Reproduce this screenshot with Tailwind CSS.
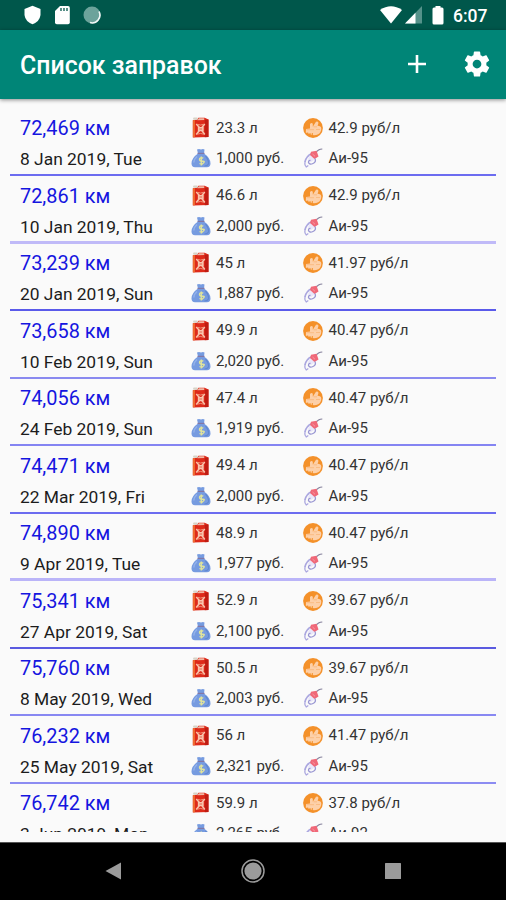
<!DOCTYPE html>
<html lang="ru">
<head>
<meta charset="utf-8">
<title>Список заправок</title>
<script src="https://cdn.jsdelivr.net/npm/@tailwindcss/browser@4"></script>
</head>
<body class="w-[506px] h-[900px] overflow-hidden bg-[#fafafa] font-['Roboto','Noto_Sans',sans-serif] flex flex-col">
<svg class="hidden">
  <symbol id="can" viewBox="0 0 16 21" preserveAspectRatio="none">
    <path d="M.8 3.200 5 2.600 6 .8h6L15.500 2.500V20L.8 20.500Z" fill="#de2a1a"/>
    <path d="M12 3 15.500 2.500V20l-3.500.3Z" fill="#c01c12"/>
    <path d="M.8 3.200v17l2 .1V3Z" fill="#ee6a30"/>
    <path d="M5 3.300 6.500 1.300h5V3Z" fill="#f0b8a5"/>
    <rect x="1" y=".5" width="4.500" height="2.200" rx="1" fill="#d8d4c8"/>
    <path d="M4 7 7 10.500M12 7 9.300 10.500M4 17.500 7 13.500M12 17.500 9.300 13.500" stroke="#f9c5ae" stroke-width="1.400" fill="none"/>
    <path d="M5 7.300q3 1.500 6 0M5 17.200q3-1.500 6 0" stroke="#f29a80" stroke-width=".9" fill="none"/>
    <rect x="5.500" y="10" width="5.500" height="4.200" fill="#f9c5ae"/>
    <path d="M7 12h2.500" stroke="#e0604a" stroke-width=".9"/>
  </symbol>
  <symbol id="bag" viewBox="0 0 20 20">
    <path d="M6 1.500q2-1 4 0 2-1 3.500 0L13 5.500q6.500 4.500 6.500 10 0 3.700-3.500 3.700H4Q.5 19.200.5 15.500.5 10 7 5.500Z" fill="#769be0"/>
    <path d="M6 8.500Q3 11 2.800 14.500" stroke="#93b2ea" stroke-width="1.500" fill="none"/>
    <path d="M6.500 5.400h7" stroke="#8277a5" stroke-width="1.200"/>
    <path d="M14.500 8q3.500 4 3 8-1 2-4 2" stroke="#6188d0" stroke-width="1.200" fill="none"/>
    <path d="M12.300 10q-3.800-1-3.800 1.200t3.300 2-.8 3q-1.500 0-2.500-.7M10.300 8.500v9" stroke="#dfe39c" stroke-width="1.400" fill="none"/>
  </symbol>
  <symbol id="coin" viewBox="0 0 20 20">
    <circle cx="10" cy="10" r="9.900" fill="#f4912a"/>
    <path d="M7 10.500V6q1.500-2 2.800-.3v3l3.200-5q2.700-.7 2.400 1.600l-.8 2.400q3.500 0 3.700 2.500 0 4-3 6-4 1.800-7.500.3L2.800 14.500l.2-3.500Z" fill="#fdd0a8"/>
    <path d="M3.500 11.700h7.500M10.500 8.800h3.500M13 11.500h4" stroke="#f8b67a" stroke-width=".8"/>
    <path d="M4.700 14.500v2M7 15v2M9.300 15v2" stroke="#f4912a" stroke-width="1"/>
  </symbol>
  <symbol id="nozzle" viewBox="0 0 20 20">
    <path d="M13 4.500Q15 1.200 19.300 1" stroke="#85819c" stroke-width="1.200" fill="none"/>
    <path d="M9 5.500Q3 8 1.800 14.500" stroke="#aaa6df" stroke-width="1.700" fill="none"/>
    <path d="M6.500 7.500 5 11.500l3 2.500 5-3.500Z" fill="#e9e6f9"/>
    <path d="M8 3.800 13.500 2.800 15.500 8.500 11.500 11 7 7Z" fill="#f06878"/>
    <path d="M9.500 6 12 8.300" stroke="#f79aa2" stroke-width="1"/>
    <path d="M12 10.500q1.500 3.500-2 5t-4.500-1q0-2.500 2-2" stroke="#9996d2" stroke-width="1.300" fill="none"/>
    <path d="M1.800 14.500q-.3 3 1.500 4.500l2-1.500" stroke="#aaa6df" stroke-width="1.300" fill="none"/>
  </symbol>
</svg>

<header class="shrink-0">
  <div class="h-[30px] bg-[#00574b] flex items-center justify-between pl-[24px] pr-[18px]">
    <div class="flex items-center gap-[13px]">
      <svg class="w-[17px] h-[20px]" viewBox="0 0 17 20"><path d="M8.500.8 16.500 4v6q-.8 6.500-8 9.200Q1.300 16.500.5 10V4Z" fill="#fff"/></svg>
      <svg class="w-[16px] h-[20px]" viewBox="0 0 16 20"><path d="M6 1h8q1.800 0 1.800 1.800v14.700q0 1.800-1.800 1.800H2.800Q1 19.300 1 17.500V6Z" fill="#fff"/><path d="M7 3v3M10 3v3M13 3v3" stroke="#00574b" stroke-width="1.300"/></svg>
      <svg class="w-[18px] h-[18px]" viewBox="0 0 18 18"><circle cx="9" cy="9" r="8.500" fill="#6ca39b"/><path d="M16 5.500A7.800 7.800 0 0 1 7 16.600" stroke="#f3f8f7" stroke-width="1.600" fill="none"/></svg>
    </div>
    <div class="flex items-center">
      <svg class="w-[22px] h-[18px]" viewBox="0 0 22 18"><path d="M0 4Q11-3.500 22 4L11 17.500Z" fill="#fff"/></svg>
      <svg class="ml-[3px] w-[17px] h-[18px]" viewBox="0 0 17 18"><path d="M17 0v17.500H0Z" fill="#55928a"/><path d="M10.500 6.700v10.800H0Z" fill="#fff"/></svg>
      <svg class="ml-[10px] w-[12px] h-[20px]" viewBox="0 0 12 20"><path d="M3.500 1h5v1.500H10q1.500 0 1.500 1.500v14q0 1.500-1.500 1.500H2Q.5 19.500.5 18V4Q.5 2.500 2 2.500h1.500Z" fill="#fff"/></svg>
      <span class="ml-[9px] mt-[2px] w-[35px] text-[17.5px] leading-[20px] font-medium text-white">6:07</span>
    </div>
  </div>
  <div class="relative h-[69px] bg-[#008577] shadow-[0_1px_4px_rgba(0,0,0,0.45)] flex items-center pl-[20px] pr-[14px]">
    <h1 class="text-[24.9px] font-medium text-white leading-[30px] pt-[3px] whitespace-nowrap">Список заправок</h1>
    <svg class="ml-auto -mt-[2px] w-[18px] h-[18px]" viewBox="0 0 18 18"><path d="M9 0v18M0 9h18" stroke="#fff" stroke-width="2.600"/></svg>
    <svg class="ml-[36px] -mt-px w-[30px] h-[30px]" viewBox="0 0 24 24"><path fill="#fff" d="M19.430 12.980c.04-.32.07-.64.07-.98s-.03-.66-.07-.98l2.110-1.650c.19-.15.24-.42.12-.64l-2-3.460c-.12-.22-.39-.3-.61-.22l-2.490 1c-.52-.4-1.080-.73-1.690-.98l-.38-2.650C14.460 2.180 14.250 2 14 2h-4c-.25 0-.46.18-.49.42l-.38 2.650c-.61.25-1.170.59-1.690.98l-2.490-1c-.23-.09-.49 0-.61.22l-2 3.460c-.13.22-.07.49.12.64l2.110 1.650c-.04.32-.07.65-.07.98s.03.66.07.98l-2.110 1.650c-.19.15-.24.42-.12.64l2 3.460c.12.22.39.3.61.22l2.490-1c.52.4 1.080.73 1.690.98l.38 2.650c.03.24.24.42.49.42h4c.25 0 .46-.18.49-.42l.38-2.650c.61-.25 1.170-.59 1.690-.98l2.490 1c.23.09.49 0 .61-.22l2-3.460c.12-.22.07-.49-.12-.64l-2.110-1.650zM12 15.500c-1.930 0-3.500-1.570-3.500-3.500s1.570-3.500 3.500-3.500 3.500 1.570 3.500 3.500-1.570 3.500-3.500 3.500z"/></svg>
  </div>
</header>

<main id="list" class="mt-[9.5px] mx-[10px] h-[723px] shrink-0 overflow-hidden"></main>

<nav class="mt-auto h-[58px] shrink-0 bg-black border-t border-[#555] pb-[2px] flex items-center justify-between pl-[105px] pr-[105px]">
  <svg class="w-[16px] h-[18px]" viewBox="0 0 16 18"><path d="M16 .5v17L.5 9Z" fill="#9b9b9b"/></svg>
  <svg class="w-[24px] h-[24px]" viewBox="0 0 24 24"><circle cx="12" cy="12" r="11" fill="none" stroke="#9b9b9b" stroke-width="1.500"/><circle cx="12" cy="12" r="8.600" fill="#9b9b9b"/></svg>
  <svg class="w-[16px] h-[16px]" viewBox="0 0 16 16"><rect width="16" height="16" rx=".5" fill="#9b9b9b"/></svg>
</nav>

<script>
const rows = [
  ["72,469", "8 Jan 2019, Tue", "23.3", "1,000", "42.9", "Аи-95", "border-b-2 border-[#6c6cf0]"],
  ["72,861", "10 Jan 2019, Thu", "46.6", "2,000", "42.9", "Аи-95", "border-b-3 border-[#c0baf8]"],
  ["73,239", "20 Jan 2019, Sun", "45", "1,887", "41.97", "Аи-95", "border-b-2 border-[#5a5aea]"],
  ["73,658", "10 Feb 2019, Sun", "49.9", "2,020", "40.47", "Аи-95", "border-b-2 border-[#8a8af0]"],
  ["74,056", "24 Feb 2019, Sun", "47.4", "1,919", "40.47", "Аи-95", "border-b-2 border-[#8484f2]"],
  ["74,471", "22 Mar 2019, Fri", "49.4", "2,000", "40.47", "Аи-95", "border-b-2 border-[#6c6cf0]"],
  ["74,890", "9 Apr 2019, Tue", "48.9", "1,977", "40.47", "Аи-95", "border-b-3 border-[#bab4f8]"],
  ["75,341", "27 Apr 2019, Sat", "52.9", "2,100", "39.67", "Аи-95", "border-b-2 border-[#5a5ae0]"],
  ["75,760", "8 May 2019, Wed", "50.5", "2,003", "39.67", "Аи-95", "border-b-2 border-[#8888f2]"],
  ["76,232", "25 May 2019, Sat", "56", "2,321", "41.47", "Аи-95", "border-b-2 border-[#8c8cf2]"],
  ["76,742", "3 Jun 2019, Mon", "59.9", "2,265", "37.8", "Аи-92", "border-b-2 border-[#8080f0]"]
];
document.getElementById("list").innerHTML = rows.map(([km, date, litres, sum, price, fuel, line]) => `
  <section class="h-[67.5px] ${line} pl-[10px] pt-[4.5px] grid grid-cols-[171px_112px_1fr] grid-rows-[30px_31px] items-center whitespace-nowrap text-[15px] text-[#333]">
    <div class="text-[19.9px] pt-[2px] text-[#1515e0]">${km} км</div>
    <div class="flex items-center gap-[7px]"><svg class="ml-[1px] mb-px w-[17px] h-[21px]"><use href="#can"/></svg><span>${litres} л</span></div>
    <div class="flex items-center gap-[5.5px]"><svg class="w-[20px] h-[20px]"><use href="#coin"/></svg><span>${price} руб/л</span></div>
    <div class="text-[17.4px] pt-[1.5px] text-[#1c1c1c]">${date}</div>
    <div class="flex items-center gap-[5px]"><svg class="mb-px w-[20px] h-[20px]"><use href="#bag"/></svg><span>${sum} руб.</span></div>
    <div class="flex items-center gap-[5.5px]"><svg class="mb-px w-[20px] h-[20px]"><use href="#nozzle"/></svg><span>${fuel}</span></div>
  </section>`).join("");
</script>
</body>
</html>
